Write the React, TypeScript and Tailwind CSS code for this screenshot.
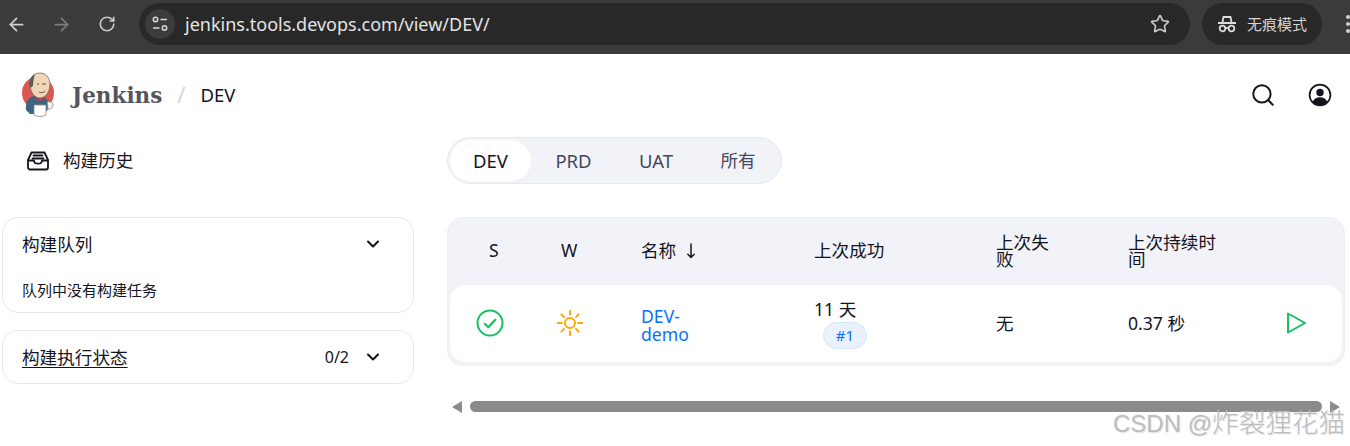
import React from "react";
import { ArrowLeft, ArrowRight, RotateCw, Star, ChevronDown, Search } from "lucide-react";

const font = { fontFamily: '"Noto Sans", "Noto Sans CJK SC", sans-serif' };

function Logo() {
  return (
    <svg width="34" height="46" viewBox="0 0 34 46" className="shrink-0">
      <ellipse cx="18" cy="21" rx="16" ry="16.500" fill="#d33833" opacity="0.85" />
      <path d="M6 38c-1-8 3-13 8-14l9 1c4 1 6 5 6 9l-2 5-7 3H10z" fill="#3d6482" />
      <path d="M10 12C10 5 14 1 20 1c6 0 10 5 10 11 0 7-4 14-10 14-6 0-10-7-10-14z" fill="#f0d6b7" stroke="#7a6a5c" strokeWidth="0.800" />
      <path d="M10 16C8 9 11 4 15 2c-1 3-2 8-2 12z" fill="#5b5b5b" />
      <path d="M22 12h4M17 12h2M19 20c2 1 5 1 6-1" stroke="#6b5344" strokeWidth="1" fill="none" />
      <path d="M16 25l4 2 4-2-1 4-3-1-3 1z" fill="#d33833" />
      <path d="M14 33h12v10c-3 2-9 2-12 0z" fill="#fff" stroke="#8a8a8a" strokeWidth="0.800" />
      <path d="M27 30c3-1 6 0 6 3s-3 5-5 4z" fill="#f4efe8" stroke="#7a7a7a" strokeWidth="0.700" />
    </svg>
  );
}

function TuneIcon() {
  return (
    <svg width="18" height="18" viewBox="0 0 18 18" fill="none" stroke="#d8d8d8" strokeWidth="1.500">
      <circle cx="4.500" cy="4.500" r="2.200" />
      <path d="M9.500 4.500H16M2 13h6.500" />
      <circle cx="13.500" cy="13" r="2.200" />
    </svg>
  );
}

function Incognito() {
  return (
    <svg width="20" height="18" viewBox="0 0 20 18" fill="none" stroke="#dcdcdc" strokeWidth="1.800">
      <path d="M5.500 7l1-5h7l1 5" />
      <path d="M1 8h18" strokeWidth="2" />
      <circle cx="5.500" cy="13.500" r="2.800" />
      <circle cx="14.500" cy="13.500" r="2.800" />
      <path d="M8.300 13h3.400" />
    </svg>
  );
}

function InboxIcon() {
  return (
    <svg width="24" height="20" viewBox="0 0 24 20" fill="none" stroke="#14141f" strokeWidth="1.800" strokeLinejoin="round" strokeLinecap="round">
      <path d="M5.500 1.500h13l3.500 7.500v7.500a2 2 0 0 1-2 2H4a2 2 0 0 1-2-2V9z" />
      <path d="M2 9.500h6c0 2 1.700 3.200 4 3.200s4-1.200 4-3.200h6" />
      <path d="M7.500 4.500h9M6.500 7.500h11" />
    </svg>
  );
}

function UserIcon() {
  return (
    <svg width="24" height="24" viewBox="0 0 24 24">
      <circle cx="12" cy="12" r="10.400" fill="none" stroke="#14141f" strokeWidth="1.700" />
      <circle cx="12" cy="9.500" r="3.700" fill="#14141f" />
      <path d="M4.800 18.500c1.500-3 4-4.200 7.200-4.200s5.700 1.200 7.200 4.200c-1.800 2.300-4.300 3.700-7.200 3.700s-5.400-1.400-7.200-3.700z" fill="#14141f" />
    </svg>
  );
}

function CheckCircle() {
  return (
    <svg width="28" height="28" viewBox="0 0 28 28" fill="none" stroke="#16c060" strokeWidth="2" strokeLinecap="round" strokeLinejoin="round">
      <circle cx="14" cy="14" r="12.500" />
      <path d="M8.800 14.800l3.500 3.400 7-7.400" strokeWidth="2.200" />
    </svg>
  );
}

function Sun() {
  return (
    <svg width="28" height="28" viewBox="0 0 28 28" fill="none" stroke="#ffa90a" strokeWidth="2" strokeLinecap="round">
      <circle cx="14" cy="14" r="5" />
      <path d="M14 1.800v4M14 22.200v4M1.800 14h4M22.200 14h4M5.400 5.400l2.600 2.600M20 20l2.600 2.600M5.400 22.600L8 20M20 8l2.600-2.600" />
    </svg>
  );
}

function Play() {
  return (
    <svg width="22" height="24" viewBox="0 0 22 24" fill="none" stroke="#16c060" strokeWidth="2" strokeLinejoin="round">
      <path d="M3 2.500v19l17-9.500z" />
    </svg>
  );
}

function SortArrow() {
  return (
    <svg width="10" height="16" viewBox="0 0 10 16" fill="none" stroke="#14141f" strokeWidth="1.500" strokeLinecap="round" strokeLinejoin="round">
      <path d="M5 1v13.500M1.800 11.200L5 14.500l3.200-3.300" />
    </svg>
  );
}

function Panel({ title, right, underline, children }: { title: string; right?: string; underline?: boolean; children?: React.ReactNode }) {
  return (
    <div className="rounded-[16px] border border-[#e6e8f1] bg-white pl-[19px] pr-[30px]">
      <div className="flex h-[52px] items-center justify-between">
        <span className={underline ? "text-[17.600px] underline underline-offset-[3px]" : "text-[17.600px]"}>{title}</span>
        <div className="flex items-center gap-[14px]">
          {right && <span className="text-[16px]">{right}</span>}
          <ChevronDown size={20} strokeWidth={2.500} color="#14141f" />
        </div>
      </div>
      {children}
    </div>
  );
}

export default function App() {
  return (
    <div className="h-[446px] w-[1350px] overflow-hidden bg-white text-[#14141f] relative" style={font}>
      {/* browser bar */}
      <div className="flex h-[54px] items-center bg-[#3b3b3b] pb-[6px]">
        <div className="flex w-[139px] shrink-0 items-center gap-[24px] pl-[6px]">
          <ArrowLeft size={21} color="#d0d0d0" />
          <ArrowRight size={21} color="#7c7c7c" />
          <RotateCw size={18} color="#c8c8c8" strokeWidth={2.200} className="ml-[2px]" />
        </div>
        <div className="flex h-[42px] w-[1051px] shrink-0 items-center rounded-full bg-[#282828] pl-[6px] pr-[20px]">
          <div className="flex h-[30px] w-[30px] items-center justify-center rounded-full bg-[#3c3c3c]">
            <TuneIcon />
          </div>
          <span className="ml-[10px] flex-1 text-[18px] text-[#e4e4e4]">jenkins.tools.devops.com/view/DEV/</span>
          <Star size={20} color="#c8c8c8" strokeWidth={2} />
        </div>
        <div className="ml-[12px] flex h-[42px] w-[120px] shrink-0 items-center gap-[10px] rounded-full bg-[#282828] pl-[15px]">
          <Incognito />
          <span className="text-[15px] text-[#d4d4d4]">无痕模式</span>
        </div>
        <div className="ml-[24px] flex shrink-0 flex-col gap-[3px]">
          <span className="h-[4px] w-[4px] rounded-full bg-[#d0d0d0]" />
          <span className="h-[4px] w-[4px] rounded-full bg-[#d0d0d0]" />
          <span className="h-[4px] w-[4px] rounded-full bg-[#d0d0d0]" />
        </div>
      </div>

      {/* header */}
      <div className="flex h-[83px] items-center justify-between pb-[2px] pl-[20px] pr-[18px]">
        <div className="flex items-center">
          <Logo />
          <span className="ml-[18px] pt-[3px] text-[21.500px] font-bold text-[#555560]" style={{ fontFamily: '"DejaVu Serif", serif' }}>Jenkins</span>
          <span className="ml-[15px] text-[22px] text-[#ced4e3]">/</span>
          <span className="ml-[15px] text-[18.500px]">DEV</span>
        </div>
        <div className="flex items-center gap-[32px]">
          <Search size={26} strokeWidth={1.800} color="#14141f" />
          <UserIcon />
        </div>
      </div>

      {/* body */}
      <div className="flex">
        <aside className="ml-[2px] w-[412px] shrink-0">
          <div className="flex h-[47px] items-center gap-[13px] pl-[24px]">
            <InboxIcon />
            <span className="text-[17.600px]">构建历史</span>
          </div>
          <div className="mt-[33px] flex flex-col gap-[17px]">
            <Panel title="构建队列">
              <div className="pb-[11px] pt-[10px] text-[15px] leading-[21px]">队列中没有构建任务</div>
            </Panel>
            <Panel title="构建执行状态" right="0/2" underline />
          </div>
        </aside>

        <main className="ml-[33px] w-[898px]">
          <div className="flex h-[47px] w-[335px] items-center rounded-full border border-[#e6e8f1] bg-[#f2f3f8] pl-[2px] text-[18.500px]">
            <div className="flex h-[41px] w-[81px] items-center justify-center rounded-full bg-white">DEV</div>
            <div className="flex w-[85px] justify-center text-[#44475f]">PRD</div>
            <div className="flex w-[80px] justify-center text-[#44475f]">UAT</div>
            <div className="flex w-[84px] justify-center text-[17.600px] text-[#44475f]">所有</div>
          </div>

          <div className="mt-[33px] h-[149px] rounded-[16px] border border-[#eceef5] bg-[#f2f3f8] px-[2px] pb-[3px]">
            <div className="flex h-[67px] items-center pb-[2px] text-[17.600px] leading-[17px]">
              <div className="w-[86px] pl-[39px]">S</div>
              <div className="w-[105px] pl-[25px]">W</div>
              <div className="flex w-[173px] items-center gap-[10px]">名称 <SortArrow /></div>
              <div className="w-[182px]">上次成功</div>
              <div className="w-[132px]"><div className="w-[60px]">上次失败</div></div>
              <div className="w-[120px]"><div className="w-[90px]">上次持续时间</div></div>
            </div>
            <div className="flex h-[77px] items-center rounded-[16px] bg-white text-[17.600px]">
              <div className="w-[86px] pl-[26px] pb-[2px]"><CheckCircle /></div>
              <div className="w-[105px] pl-[20px] pb-[2px]"><Sun /></div>
              <div className="w-[173px] pt-[2px] leading-[18px] text-[#0d6efd]"><div className="w-[60px]">DEV-demo</div></div>
              <div className="w-[182px]">
                <div className="mb-[2px] leading-[22px]">11 天</div>
                <div className="ml-[9px] flex h-[27px] w-[44px] items-center justify-center rounded-full border border-[#d5e5fb] bg-[#e8f1fd] text-[15px] text-[#0d6efd]">#1</div>
              </div>
              <div className="w-[132px]">无</div>
              <div className="w-[157px]">0.37 秒</div>
              <div className="pb-[2px]"><Play /></div>
            </div>
          </div>

          <div className="mt-[35px] flex h-[11px] items-center">
            <span className="ml-[5px] h-0 w-0 border-y-[6px] border-r-[10px] border-y-transparent border-r-[#8b8b8b]" />
            <div className="ml-[8px] h-[11px] w-[852px] rounded-full bg-[#8b8b8b]" />
            <span className="ml-[8px] h-0 w-0 border-y-[6px] border-l-[10px] border-y-transparent border-l-[#8b8b8b]" />
          </div>
        </main>
      </div>

      <div className="absolute left-[1113px] top-[404px] whitespace-nowrap text-[24px] text-[#bdbdbd] [text-shadow:1px_1px_1px_rgba(170,170,170,0.35)]" style={{ fontFamily: '"Liberation Sans", "Noto Sans CJK SC", sans-serif' }}>
        CSDN @<span className="text-[26.600px] font-light">炸裂狸花猫</span>
      </div>
    </div>
  );
}
